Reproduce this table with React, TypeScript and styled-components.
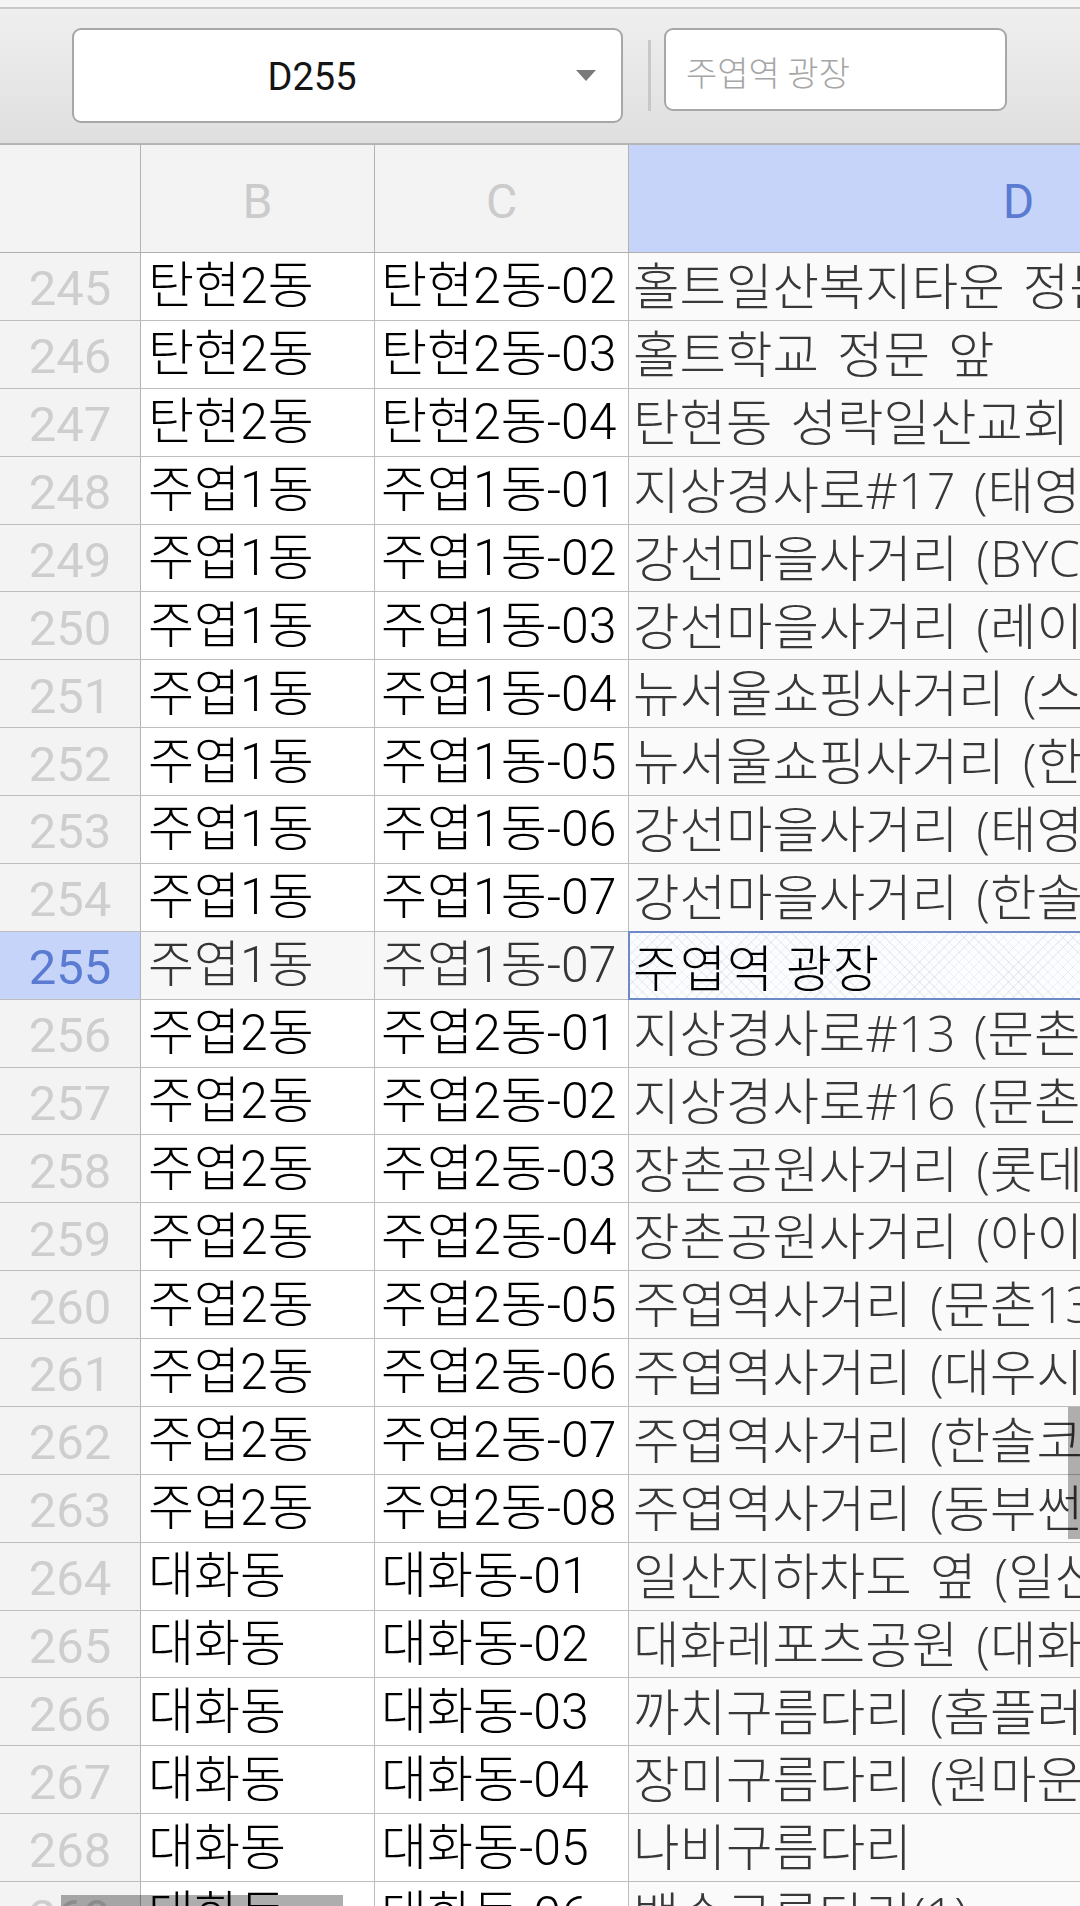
import React from "react";
import styled, { createGlobalStyle, css } from "styled-components";

const GlobalStyle = createGlobalStyle`
  html, body { margin: 0; padding: 0; background: #ffffff; overflow: hidden; }
  #root { width: 1080px; height: 1906px; }
`;

const ROW_H = 67.875;
const COLS = { num: 141, b: 234, c: 254, d: 780 };

const Page = styled.div`
  position: relative;
  width: 1080px;
  height: 1906px;
  overflow: hidden;
  background: #ffffff;
  font-family: "Noto Sans CJK KR", "Noto Sans", sans-serif;
`;

const TopStrip = styled.div`
  height: 7px;
  background: #f5f5f5;
  border-bottom: 2px solid #c9c9c9;
`;

const Toolbar = styled.div`
  box-sizing: border-box;
  height: 136px;
  padding: 19px 0 0 72px;
  border-bottom: 2px solid #b4b4b4;
  background: linear-gradient(#efefef, #dfdfdf);
  display: flex;
  align-items: flex-start;
`;

const NameBox = styled.div`
  box-sizing: border-box;
  width: 551px;
  height: 95px;
  border: 2px solid #a7a7a7;
  border-radius: 9px;
  background: #ffffff;
  display: flex;
  align-items: center;
`;

const NameText = styled.div`
  flex: 1;
  text-align: center;
  padding-top: 4px;
  font-family: Roboto, "Liberation Sans", sans-serif;
  font-size: 38px;
  line-height: 1.2;
  color: #141414;
`;

const ArrowBox = styled.div`
  width: 71px;
  display: flex;
  justify-content: center;
  align-items: center;
`;

const Divider = styled.div`
  width: 3px;
  height: 71px;
  margin: 12px 0 0 25px;
  background: #c8c8c8;
`;

const FormulaBox = styled.div`
  box-sizing: border-box;
  width: 343px;
  height: 83px;
  margin-left: 13px;
  padding: 6px 0 0 20px;
  border: 2px solid #a7a7a7;
  border-radius: 9px;
  background: #ffffff;
  display: flex;
  align-items: center;
  font-size: 34px;
  font-weight: 300;
  line-height: 1.2;
  color: #a6a6a6;
  white-space: nowrap;
`;

const Sheet = styled.div`
  display: flex;
  flex-direction: column;
`;

const Row = styled.div<{ $header?: boolean }>`
  box-sizing: border-box;
  display: flex;
  flex: none;
  height: ${(p) => (p.$header ? "108px" : `${ROW_H}px`)};
  border-bottom: 1px solid ${(p) => (p.$header ? "#afafaf" : "#bdbdbd")};
`;

const RowHead = styled.div<{ $active?: boolean }>`
  box-sizing: border-box;
  flex: none;
  width: ${COLS.num}px;
  border-right: 1px solid #b3b3b3;
  background: ${(p) => (p.$active ? "#c6d4fa" : "#f3f3f3")};
  color: ${(p) => (p.$active ? "#5a7bd1" : "#cecece")};
  display: flex;
  align-items: center;
  justify-content: center;
  padding-top: 6px;
  font-family: Roboto, "Liberation Sans", sans-serif;
  font-size: 49px;
  line-height: 1.1;
`;

const ColHead = styled.div<{ $w: number; $active?: boolean }>`
  box-sizing: border-box;
  flex: none;
  width: ${(p) => p.$w}px;
  border-right: 1px solid #b3b3b3;
  background: ${(p) => (p.$active ? "#c6d4fa" : "#f3f3f3")};
  color: ${(p) => (p.$active ? "#5a7bd1" : "#cbcbcb")};
  display: flex;
  align-items: center;
  justify-content: center;
  padding-top: 6px;
  font-family: Roboto, "Liberation Sans", sans-serif;
  font-size: 48px;
  line-height: 1.2;
`;

type Tone = "plain" | "dim" | "addr" | "active";

const toneStyles: Record<Tone, ReturnType<typeof css>> = {
  plain: css`
    background: #ffffff;
    color: #000000;
    font-family: Roboto, "Noto Sans CJK KR", sans-serif;
  `,
  dim: css`
    background: #f7f7f7;
    color: #353535;
    font-family: Roboto, "Noto Sans CJK KR", sans-serif;
  `,
  addr: css`
    background: #fafafa;
    color: #383838;
    font-size: 50.5px;
    word-spacing: 5px;
    font-family: "Open Sans", "Noto Sans CJK KR", sans-serif;
  `,
  active: css`
    position: relative;
    z-index: 2;
    color: #000000;
    letter-spacing: 1px;
    background-color: #fcfdff;
    background-image: repeating-linear-gradient(
        45deg,
        rgba(120, 140, 180, 0.12) 0 1px,
        transparent 1px 7px
      ),
      repeating-linear-gradient(
        -45deg,
        rgba(120, 140, 180, 0.12) 0 1px,
        transparent 1px 7px
      );
    outline: 2px solid #6f8bc7;
    outline-offset: -1px;
  `,
};

const Cell = styled.div<{ $w: number; $tone: Tone; $pad: number }>`
  box-sizing: border-box;
  flex: none;
  width: ${(p) => p.$w}px;
  border-right: 1px solid #bdbdbd;
  padding-left: ${(p) => p.$pad}px;
  display: flex;
  align-items: center;
  overflow: hidden;
  white-space: nowrap;
  font-size: 50px;
  font-weight: 300;
  line-height: 1.2;
  ${(p) => toneStyles[p.$tone]}
`;

const VScroll = styled.div`
  position: absolute;
  left: 1068px;
  top: 1407px;
  width: 12px;
  height: 132px;
  background: rgba(0, 0, 0, 0.3);
`;

const HScroll = styled.div`
  position: absolute;
  left: 61px;
  top: 1895px;
  width: 282px;
  height: 14px;
  background: rgba(0, 0, 0, 0.32);
`;

type RowData = [number, string, string, string];

const rows: RowData[] = [
  [245, "탄현2동", "탄현2동-02", "홀트일산복지타운 정문"],
  [246, "탄현2동", "탄현2동-03", "홀트학교 정문 앞"],
  [247, "탄현2동", "탄현2동-04", "탄현동 성락일산교회 앞"],
  [248, "주엽1동", "주엽1동-01", "지상경사로#17 (태영)"],
  [249, "주엽1동", "주엽1동-02", "강선마을사거리 (BYC)"],
  [250, "주엽1동", "주엽1동-03", "강선마을사거리 (레이크)"],
  [251, "주엽1동", "주엽1동-04", "뉴서울쇼핑사거리 (스타)"],
  [252, "주엽1동", "주엽1동-05", "뉴서울쇼핑사거리 (한솔)"],
  [253, "주엽1동", "주엽1동-06", "강선마을사거리 (태영)"],
  [254, "주엽1동", "주엽1동-07", "강선마을사거리 (한솔)"],
  [255, "주엽1동", "주엽1동-07", "주엽역 광장"],
  [256, "주엽2동", "주엽2동-01", "지상경사로#13 (문촌)"],
  [257, "주엽2동", "주엽2동-02", "지상경사로#16 (문촌)"],
  [258, "주엽2동", "주엽2동-03", "장촌공원사거리 (롯데)"],
  [259, "주엽2동", "주엽2동-04", "장촌공원사거리 (아이)"],
  [260, "주엽2동", "주엽2동-05", "주엽역사거리 (문촌13)"],
  [261, "주엽2동", "주엽2동-06", "주엽역사거리 (대우시티)"],
  [262, "주엽2동", "주엽2동-07", "주엽역사거리 (한솔코)"],
  [263, "주엽2동", "주엽2동-08", "주엽역사거리 (동부썬)"],
  [264, "대화동", "대화동-01", "일산지하차도 옆 (일산)"],
  [265, "대화동", "대화동-02", "대화레포츠공원 (대화)"],
  [266, "대화동", "대화동-03", "까치구름다리 (홈플러스)"],
  [267, "대화동", "대화동-04", "장미구름다리 (원마운트)"],
  [268, "대화동", "대화동-05", "나비구름다리"],
  [269, "대화동", "대화동-06", "백송구름다리(1)"],
];

const ACTIVE_ROW = 255;

export default function App() {
  return (
    <Page>
      <GlobalStyle />
      <TopStrip />
      <Toolbar>
        <NameBox>
          <NameText>D255</NameText>
          <ArrowBox>
            <svg width="20" height="11" viewBox="0 0 20 11">
              <path d="M0 0 H20 L10 11 Z" fill="#7a7a7a" />
            </svg>
          </ArrowBox>
        </NameBox>
        <Divider />
        <FormulaBox>주엽역 광장</FormulaBox>
      </Toolbar>
      <Sheet>
        <Row $header>
          <RowHead />
          <ColHead $w={COLS.b}>B</ColHead>
          <ColHead $w={COLS.c}>C</ColHead>
          <ColHead $w={COLS.d} $active>
            D
          </ColHead>
        </Row>
        {rows.map(([n, b, c, d]) => {
          const active = n === ACTIVE_ROW;
          return (
            <Row key={n}>
              <RowHead $active={active}>{n}</RowHead>
              <Cell $w={COLS.b} $pad={7} $tone={active ? "dim" : "plain"}>
                {b}
              </Cell>
              <Cell $w={COLS.c} $pad={6} $tone={active ? "dim" : "plain"}>
                {c}
              </Cell>
              <Cell $w={COLS.d} $pad={4} $tone={active ? "active" : "addr"}>
                {d}
              </Cell>
            </Row>
          );
        })}
      </Sheet>
      <VScroll />
      <HScroll />
    </Page>
  );
}
